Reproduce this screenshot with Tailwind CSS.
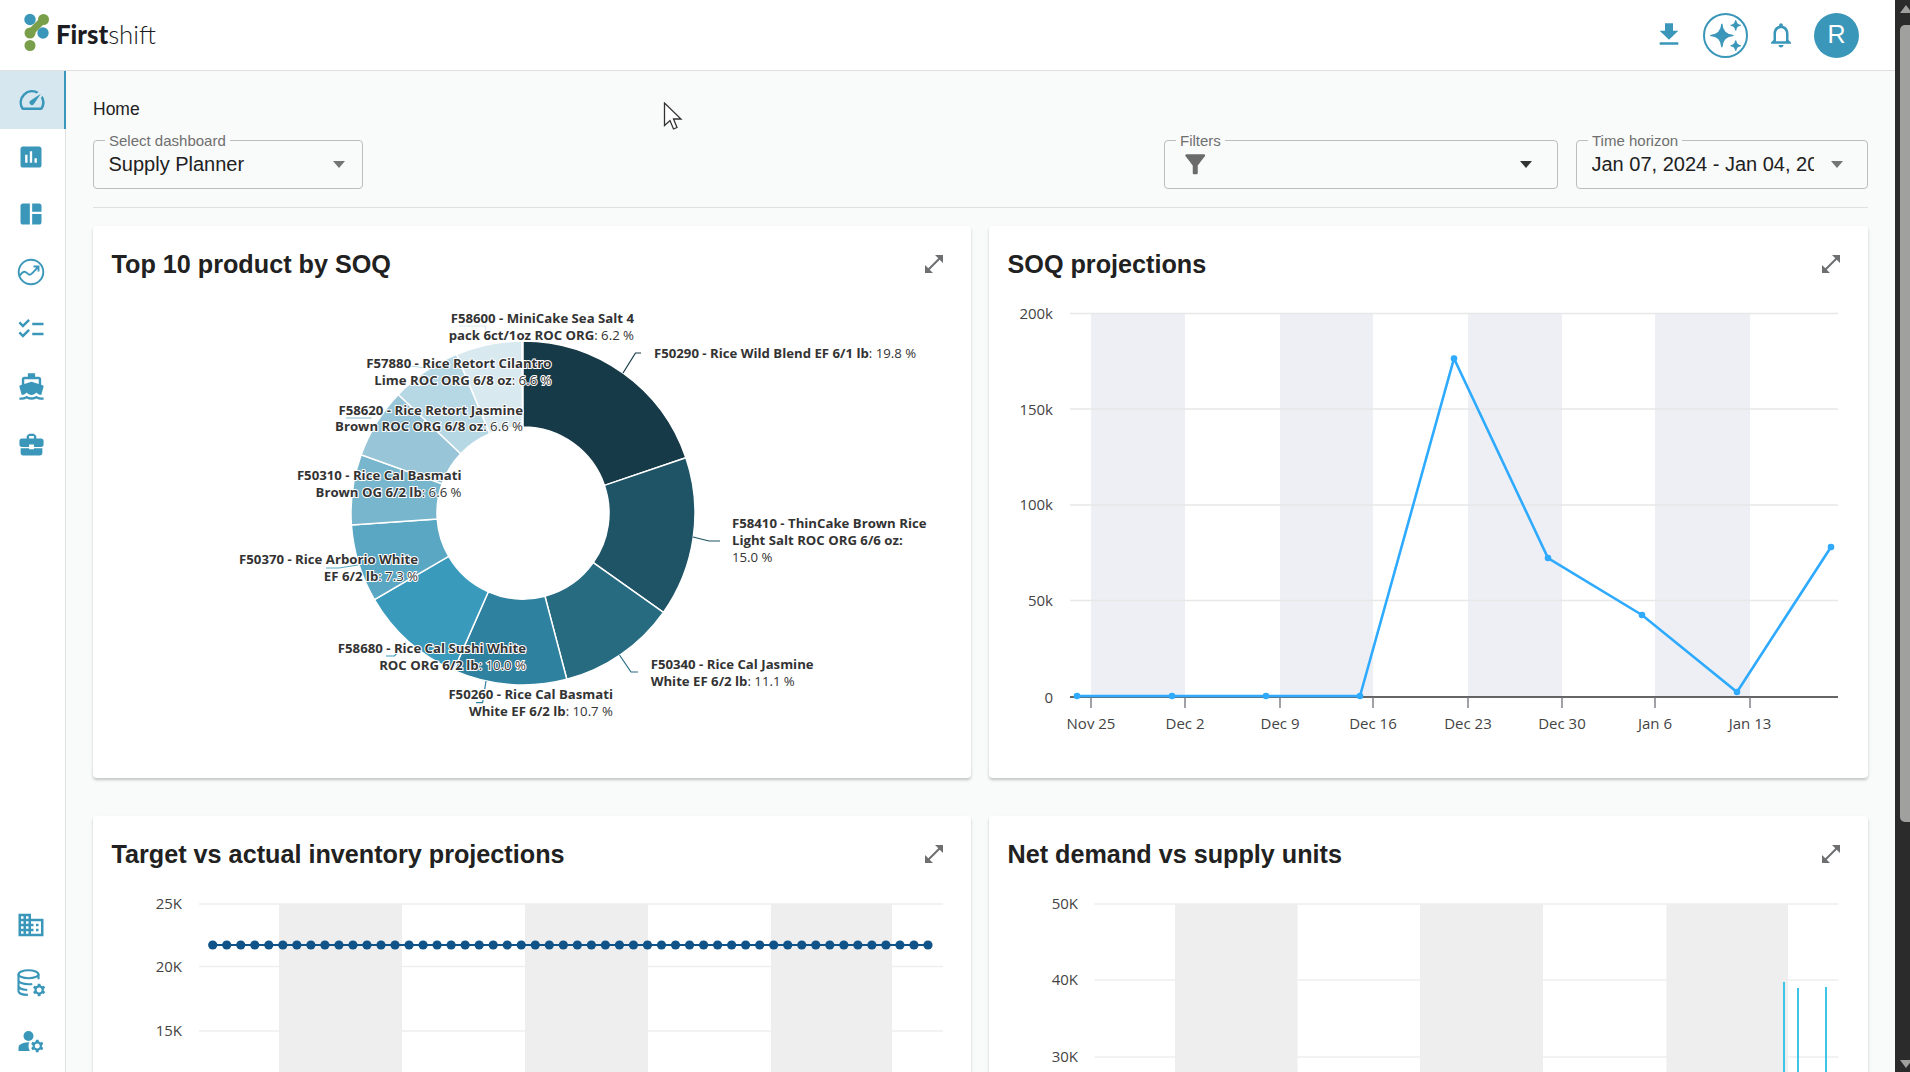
<!DOCTYPE html>
<html lang="en">
<head>
  <meta charset="UTF-8">
  <title>Firstshift - Home</title>
  <script src="https://cdn.jsdelivr.net/npm/@tailwindcss/browser@4"></script>
</head>
<body class="h-screen overflow-hidden bg-[#f9fafa] text-[#212121] font-['Liberation_Sans',Arial,sans-serif]">
<div class="flex h-screen">
  <div class="flex-1 flex flex-col min-w-0">

    <!-- Header -->
    <header class="h-[71px] shrink-0 bg-white border-b border-[#dfe1e1] flex items-center justify-between pl-[21px] pr-[36px]">
      <div class="flex items-center gap-[5px] -mt-[2px]">
        <svg class="w-[30px] h-[44px]" viewBox="21 13 30 44">
          <path d="M43.5 20.5 30 34" stroke="#7a9f4a" stroke-width="7"/>
          <circle cx="30" cy="20.5" r="5.7" fill="#3b97b9"/>
          <circle cx="43.5" cy="20.5" r="5.5" fill="#7a9f4a"/>
          <circle cx="30" cy="34" r="5.5" fill="#7a9f4a"/>
          <circle cx="43" cy="34" r="5.7" fill="#3b97b9"/>
          <circle cx="30" cy="46.5" r="5.5" fill="#7a9f4a"/>
        </svg>
        <div class="font-['Lato',sans-serif] text-[25.8px] leading-none text-[#1c1c22] mt-[2px]"><span class="font-black">First</span><span class="font-light">shift</span></div>
      </div>
      <div class="flex items-center">
        <svg class="w-[24px] h-[24px] -mt-[2px] fill-[#3b97b9] mr-[22px]" viewBox="3 2 18 19" preserveAspectRatio="none"><path d="M5 20h14v-2H5v2zM19 9h-4V3H9v6H5l7 7 7-7z"/></svg>
        <div class="w-[45px] h-[45px] rounded-full border-2 border-[#3b97b9] flex items-center justify-center mr-[18.5px]">
          <svg class="w-[35px] h-[35px] fill-[#3b97b9]" viewBox="0 0 24 24"><path d="M19 8.5Q19.3 5.3 22.5 5 19.3 4.7 19 1.5 18.7 4.7 15.5 5 18.7 5.3 19 8.5zM9.5 20Q9.9 12.4 17.5 12 9.9 11.6 9.5 4 9.1 11.6 1.5 12 9.1 12.4 9.5 20zM19 15.5Q18.7 18.7 15.5 19 18.7 19.3 19 22.5 19.3 19.3 22.5 19 19.3 18.7 19 15.5z" stroke="#3b97b9" stroke-width=".8"/></svg>
        </div>
        <svg class="w-[30px] h-[30px] fill-[#3b97b9] mr-[18px]" viewBox="0 0 24 24"><path d="M12 22c1.1 0 2-.9 2-2h-4c0 1.1.9 2 2 2zm6-6v-5c0-3.07-1.63-5.64-4.5-6.32V4c0-.83-.67-1.5-1.5-1.5s-1.5.67-1.5 1.5v.68C7.64 5.36 6 7.92 6 11v5l-2 2v1h16v-1l-2-2zm-2 1H8v-6c0-2.48 1.51-4.5 4-4.5s4 2.02 4 4.5v6z"/></svg>
        <div class="w-[45px] h-[45px] rounded-full bg-[#3b97b9] text-white text-[25px] flex items-center justify-center">R</div>
      </div>
    </header>

    <div class="flex-1 flex min-h-0">
      <!-- Sidebar -->
      <aside class="w-[66px] shrink-0 bg-white border-r border-[#dfe1e1] flex flex-col justify-between fill-[#3b97b9]">
        <div class="flex flex-col">
          <div class="h-[58px] flex items-center justify-center bg-[#d6e7ef] border-r-2 border-[#3b97b9] -mr-px pr-[1px]">
            <svg class="w-[30px] h-[30px]" viewBox="0 0 24 24"><path d="m20.38 8.57-1.23 1.85a8 8 0 0 1-.22 7.58H5.07A8 8 0 0 1 15.58 6.85l1.85-1.23A10 10 0 0 0 3.35 19a2 2 0 0 0 1.72 1h13.85a2 2 0 0 0 1.74-1 10 10 0 0 0-.27-10.44zm-9.79 6.84a2 2 0 0 0 2.83 0l5.66-8.49-8.49 5.66a2 2 0 0 0 0 2.83z"/></svg>
          </div>
          <div class="flex flex-col -mt-[1px] pr-[3px]">
            <div class="h-[57.5px] flex items-center justify-center"><svg class="w-[28px] h-[28px]" viewBox="0 0 24 24"><path d="M19 3H5c-1.1 0-2 .9-2 2v14c0 1.1.9 2 2 2h14c1.1 0 2-.9 2-2V5c0-1.1-.9-2-2-2zM9 17H7v-7h2v7zm4 0h-2V7h2v10zm4 0h-2v-4h2v4z"/></svg></div>
            <div class="h-[57.5px] flex items-center justify-center"><svg class="w-[28px] h-[28px]" viewBox="0 0 24 24"><path d="M11 21H5c-1.1 0-2-.9-2-2V5c0-1.1.9-2 2-2h6v18zm2 0h6c1.1 0 2-.9 2-2v-7h-8v9zm8-11V5c0-1.1-.9-2-2-2h-6v7h8z"/></svg></div>
            <div class="h-[57.5px] flex items-center justify-center"><svg class="w-[28px] h-[28px] fill-none stroke-[#3b97b9]" viewBox="0 0 28 28" stroke-width="1.9"><circle cx="14" cy="14" r="12.3"/><path d="M3 17.5c2-3 3.5-4.5 5.5-3.5s3 3.5 5 2.5 5-5 7.5-7.5M16.5 8.5h5v5"/></svg></div>
            <div class="h-[57.5px] flex items-center justify-center"><svg class="w-[30px] h-[30px]" viewBox="0 0 24 24"><path d="M22 7h-9v2h9V7zm0 8h-9v2h9v-2zM5.54 11 2 7.46l1.41-1.41 2.12 2.12 4.24-4.24 1.41 1.41L5.54 11zm0 8L2 15.46l1.41-1.41 2.12 2.12 4.24-4.24 1.41 1.41L5.54 19z"/></svg></div>
            <div class="h-[57.5px] flex items-center justify-center"><svg class="w-[29px] h-[29px]" viewBox="0 0 24 24"><path d="M20 21c-1.39 0-2.78-.47-4-1.32-2.44 1.71-5.56 1.71-8 0C6.78 20.53 5.39 21 4 21H2v2h2c1.38 0 2.74-.35 4-.99 2.52 1.29 5.48 1.29 8 0 1.26.65 2.62.99 4 .99h2v-2h-2zM3.95 19H4c1.6 0 3.02-.88 4-2 .98 1.12 2.4 2 4 2s3.02-.88 4-2c.98 1.12 2.4 2 4 2h.05l1.89-6.68c.08-.26.06-.54-.06-.78s-.34-.42-.6-.5L20 10.62V6c0-1.1-.9-2-2-2h-3V1H9v3H6c-1.1 0-2 .9-2 2v4.62l-1.29.42c-.26.08-.48.26-.6.5s-.15.52-.06.78L3.95 19zM6 6h12v3.97L12 8 6 9.97V6z"/></svg></div>
            <div class="h-[57.5px] flex items-center justify-center"><svg class="w-[29px] h-[29px]" viewBox="0 0 24 24"><path d="M10 16v-1H3.01L3 19c0 1.11.89 2 2 2h14c1.11 0 2-.89 2-2v-4h-7v1h-4zm10-9h-4.01V5l-2-2h-4l-2 2v2H4c-1.1 0-2 .9-2 2v3c0 1.11.89 2 2 2h6v-2h4v2h6c1.1 0 2-.9 2-2V9c0-1.1-.9-2-2-2zm-6 0h-4V5h4v2z"/></svg></div>
          </div>
        </div>
        <div class="flex flex-col pb-[2px] pr-[3px]">
          <div class="h-[58px] flex items-center justify-center"><svg class="w-[30px] h-[30px]" viewBox="0 0 24 24"><path d="M12 7V3H2v18h20V7H12zM6 19H4v-2h2v2zm0-4H4v-2h2v2zm0-4H4V9h2v2zm0-4H4V5h2v2zm4 12H8v-2h2v2zm0-4H8v-2h2v2zm0-4H8V9h2v2zm0-4H8V5h2v2zm10 12h-8v-2h2v-2h-2v-2h2v-2h-2V9h8v10zm-2-8h-2v2h2v-2zm0 4h-2v2h2v-2z"/></svg></div>
          <div class="h-[58px] flex items-center justify-center">
            <svg class="w-[30px] h-[30px]" viewBox="0 0 24 24">
              <g fill="none" stroke="#3b97b9" stroke-width="1.7"><ellipse cx="10" cy="5" rx="8" ry="3.2"/><path d="M2 5v13.5c0 1.6 3 2.9 7.5 3M2 9.8c0 1.7 3.5 3.2 8 3.2 1 0 2 0 3-.2M2 14.4c0 1.7 3.2 3 7 3.2M18 5v4"/></g>
              <path transform="translate(1.5 1.5)" d="M20.75 16c0-.22-.03-.42-.06-.63l1.14-1.01-1-1.73-1.45.49c-.32-.27-.68-.48-1.08-.63L18 11h-2l-.3 1.49c-.4.15-.76.36-1.08.63l-1.45-.49-1 1.73 1.14 1.01c-.03.21-.06.41-.06.63s.03.42.06.63l-1.14 1.01 1 1.73 1.45-.49c.32.27.68.48 1.08.63L16 21h2l.3-1.49c.4-.15.76-.36 1.08-.63l1.45.49 1-1.73-1.14-1.01c.03-.21.06-.41.06-.63zM17 18c-1.1 0-2-.9-2-2s.9-2 2-2 2 .9 2 2-.9 2-2 2z"/>
            </svg>
          </div>
          <div class="h-[58px] flex items-center justify-center"><svg class="w-[30px] h-[30px]" viewBox="0 0 24 24"><circle cx="10" cy="8" r="4"/><path d="M10.67 13.02c-.22-.01-.44-.02-.67-.02-2.42 0-4.68.67-6.61 1.82-.88.52-1.39 1.5-1.39 2.53V20h9.26c-.79-1.13-1.26-2.51-1.26-4 0-1.07.25-2.07.67-2.98z"/><path d="M20.75 16c0-.22-.03-.42-.06-.63l1.14-1.01-1-1.73-1.45.49c-.32-.27-.68-.48-1.08-.63L18 11h-2l-.3 1.49c-.4.15-.76.36-1.08.63l-1.45-.49-1 1.73 1.14 1.01c-.03.21-.06.41-.06.63s.03.42.06.63l-1.14 1.01 1 1.73 1.45-.49c.32.27.68.48 1.08.63L16 21h2l.3-1.49c.4-.15.76-.36 1.08-.63l1.45.49 1-1.73-1.14-1.01c.03-.21.06-.41.06-.63zM17 18c-1.1 0-2-.9-2-2s.9-2 2-2 2 .9 2 2-.9 2-2 2z"/></svg></div>
        </div>
      </aside>

      <!-- Main -->
      <main class="flex-1 min-w-0 overflow-hidden px-[27px]">
        <div class="pt-[28px] text-[17.5px] leading-[20px]">Home</div>
        <div class="mt-[21px] flex items-start justify-between pb-[18px] border-b border-[#dfe1e1]">
          <div class="relative w-[270px] h-[49px] border border-[#bdbdbd] rounded-[4px] flex items-center justify-between pl-[14.5px] pr-[17px]">
            <span class="absolute -top-[9px] left-[11px] px-[4px] bg-[#f9fafa] text-[15px] leading-[17px] text-[#6f6f6f]">Select dashboard</span>
            <span class="text-[20px] -mt-[2px]">Supply Planner</span>
            <span class="w-0 h-0 border-x-[6.5px] border-x-transparent border-t-[7px] border-t-[#757575]"></span>
          </div>
          <div class="flex gap-[18px]">
            <div class="relative w-[394px] h-[49px] border border-[#bdbdbd] rounded-[4px] flex items-center justify-between pl-[19px] pr-[25px]">
              <span class="absolute -top-[9px] left-[11px] px-[4px] bg-[#f9fafa] text-[15px] leading-[17px] text-[#6f6f6f]">Filters</span>
              <svg class="w-[22.5px] h-[22.5px] fill-[#6b6b6b]" viewBox="3 3 18 18"><path d="M4.25 5.61C6.27 8.2 10 13 10 13v6c0 .55.45 1 1 1h2c.55 0 1-.45 1-1v-6s3.72-4.8 5.74-7.39c.51-.66.04-1.61-.79-1.61H5.04c-.83 0-1.3.95-.79 1.61z"/></svg>
              <span class="w-0 h-0 border-x-[6.5px] border-x-transparent border-t-[7px] border-t-[#333]"></span>
            </div>
            <div class="relative w-[292px] h-[49px] border border-[#bdbdbd] rounded-[4px] flex items-center justify-between pl-[14.5px] pr-[24px]">
              <span class="absolute -top-[9px] left-[11px] px-[4px] bg-[#f9fafa] text-[15px] leading-[17px] text-[#6f6f6f]">Time horizon</span>
              <span class="text-[20px] w-[222px] -mt-[2px] overflow-hidden whitespace-nowrap">Jan 07, 2024 - Jan 04, 2025</span>
              <span class="w-0 h-0 border-x-[6.5px] border-x-transparent border-t-[7px] border-t-[#757575]"></span>
            </div>
          </div>
        </div>

        <div class="mt-[18px] grid grid-cols-[878px_879px] gap-x-[18px] gap-y-[38px] font-['Open_Sans',sans-serif]">

          <!-- Top 10 product by SOQ -->
          <section class="h-[552px] bg-white rounded-[4px] shadow-[0_2px_3px_rgba(0,0,0,0.22)]">
            <div class="h-[76px] flex items-center justify-between pl-[18.5px] pr-[25px]">
              <h2 class="mt-[2px] font-['Liberation_Sans',Arial,sans-serif] text-[25.2px] font-bold">Top 10 product by SOQ</h2>
              <svg class="w-[24px] h-[24px] fill-[#6d6f71]" viewBox="0 0 24 24"><path d="M21 11V3h-8l3.29 3.29-10 10L3 13v8h8l-3.29-3.29 10-10z"/></svg>
            </div>
            <svg class="block" width="878" height="476" viewBox="93 302 878 476">
              <g id="pie"></g>
              <g fill="none" stroke-width="1.2">
                <path d="M623 373 635.5 353H641" stroke="#163a47"/>
                <path d="M693 537 709 541H720" stroke="#1f5366"/>
                <path d="M619.5 655 631 672H638" stroke="#276b81"/>
                <path d="M486 681 482.6 702.7H476" stroke="#2f81a0"/>
                <path d="M406 642 394.5 656H386" stroke="#3a9abb"/>
                <path d="M358 565 339 568H326" stroke="#59a7c3"/>
                <path d="M371.5 418H346" stroke="#98c6d8"/>
                <path d="M426.6 368 410.5 366" stroke="#b6d8e4"/>
                <path d="M486 332 485 326H459" stroke="#d8e9f0"/>
              </g>
              <g class="text-[13.2px] fill-[#333] stroke-white stroke-[2px] [paint-order:stroke]" font-weight="700">
                <text x="634" y="322.5" text-anchor="end">F58600 - MiniCake Sea Salt 4</text>
                <text x="634" y="339.5" text-anchor="end">pack 6ct/1oz ROC ORG<tspan font-weight="400">: 6.2 %</tspan></text>
                <text x="654" y="357.5">F50290 - Rice Wild Blend EF 6/1 lb<tspan font-weight="400">: 19.8 %</tspan></text>
                <text x="551.5" y="367.5" text-anchor="end">F57880 - Rice Retort Cilantro</text>
                <text x="551.5" y="384.5" text-anchor="end">Lime ROC ORG 6/8 oz<tspan font-weight="400">: 6.6 %</tspan></text>
                <text x="523" y="414.5" text-anchor="end">F58620 - Rice Retort Jasmine</text>
                <text x="523" y="430.5" text-anchor="end">Brown ROC ORG 6/8 oz<tspan font-weight="400">: 6.6 %</tspan></text>
                <text x="461.5" y="479.5" text-anchor="end">F50310 - Rice Cal Basmati</text>
                <text x="461.5" y="496.5" text-anchor="end">Brown OG 6/2 lb<tspan font-weight="400">: 6.6 %</tspan></text>
                <text x="732" y="527.5">F58410 - ThinCake Brown Rice</text>
                <text x="732" y="544.5">Light Salt ROC ORG 6/6 oz:</text>
                <text x="732" y="561.5" font-weight="400">15.0 %</text>
                <text x="418" y="563.5" text-anchor="end">F50370 - Rice Arborio White</text>
                <text x="418" y="580.5" text-anchor="end">EF 6/2 lb<tspan font-weight="400">: 7.3 %</tspan></text>
                <text x="526" y="652.5" text-anchor="end">F58680 - Rice Cal Sushi White</text>
                <text x="526" y="669.5" text-anchor="end">ROC ORG 6/2 lb<tspan font-weight="400">: 10.0 %</tspan></text>
                <text x="650.7" y="668.5">F50340 - Rice Cal Jasmine</text>
                <text x="650.7" y="685.5">White EF 6/2 lb<tspan font-weight="400">: 11.1 %</tspan></text>
                <text x="613" y="698.5" text-anchor="end">F50260 - Rice Cal Basmati</text>
                <text x="613" y="715.5" text-anchor="end">White EF 6/2 lb<tspan font-weight="400">: 10.7 %</tspan></text>
              </g>
            </svg>
          </section>

          <!-- SOQ projections -->
          <section class="h-[552px] bg-white rounded-[4px] shadow-[0_2px_3px_rgba(0,0,0,0.22)]">
            <div class="h-[76px] flex items-center justify-between pl-[18.5px] pr-[25px]">
              <h2 class="mt-[2px] font-['Liberation_Sans',Arial,sans-serif] text-[25.2px] font-bold">SOQ projections</h2>
              <svg class="w-[24px] h-[24px] fill-[#6d6f71]" viewBox="0 0 24 24"><path d="M21 11V3h-8l3.29 3.29-10 10L3 13v8h8l-3.29-3.29 10-10z"/></svg>
            </div>
            <svg class="block" width="879" height="476" viewBox="989 302 879 476">
              <g fill="#eeeff4">
                <rect x="1091" y="313" width="94" height="384"/>
                <rect x="1280" y="313" width="93" height="384"/>
                <rect x="1468" y="313" width="94" height="384"/>
                <rect x="1655" y="313" width="95" height="384"/>
              </g>
              <g stroke="#e8e8e8" stroke-width="1.3">
                <path d="M1070 313.5H1838M1070 409H1838M1070 505H1838M1070 600.5H1838"/>
              </g>
              <path d="M1070 697H1838" stroke="#333" stroke-width="1.3"/>
              <path d="M1091 697v11M1185 697v11M1280 697v11M1373 697v11M1468 697v11M1562 697v11M1655 697v11M1750 697v11" stroke="#6e7079" stroke-width="1.3"/>
              <g class="text-[15px] fill-[#444]" text-anchor="end">
                <text x="1053" y="319">200k</text>
                <text x="1053" y="415">150k</text>
                <text x="1053" y="510">100k</text>
                <text x="1053" y="606">50k</text>
                <text x="1053" y="702.5">0</text>
              </g>
              <g class="text-[15px] fill-[#444]" text-anchor="middle">
                <text x="1091" y="729">Nov 25</text>
                <text x="1185" y="729">Dec 2</text>
                <text x="1280" y="729">Dec 9</text>
                <text x="1373" y="729">Dec 16</text>
                <text x="1468" y="729">Dec 23</text>
                <text x="1562" y="729">Dec 30</text>
                <text x="1655" y="729">Jan 6</text>
                <text x="1750" y="729">Jan 13</text>
              </g>
              <polyline points="1077,696 1172,696 1266,696 1360,696 1454,358.5 1548,558 1642,615 1737,692 1831,547" fill="none" stroke="#2eaaff" stroke-width="2.6"/>
              <g fill="#2eaaff">
                <circle cx="1077" cy="696" r="3.3"/><circle cx="1172" cy="696" r="3.3"/><circle cx="1266" cy="696" r="3.3"/><circle cx="1360" cy="696" r="3.3"/><circle cx="1454" cy="358.5" r="3.3"/><circle cx="1548" cy="558" r="3.3"/><circle cx="1642" cy="615" r="3.3"/><circle cx="1737" cy="692" r="3.3"/><circle cx="1831" cy="547" r="3.3"/>
              </g>
            </svg>
          </section>

          <!-- Target vs actual inventory projections -->
          <section class="h-[552px] bg-white rounded-[4px] shadow-[0_2px_3px_rgba(0,0,0,0.22)]">
            <div class="h-[76px] flex items-center justify-between pl-[18.5px] pr-[25px]">
              <h2 class="mt-[2px] font-['Liberation_Sans',Arial,sans-serif] text-[25.2px] font-bold">Target vs actual inventory projections</h2>
              <svg class="w-[24px] h-[24px] fill-[#6d6f71]" viewBox="0 0 24 24"><path d="M21 11V3h-8l3.29 3.29-10 10L3 13v8h8l-3.29-3.29 10-10z"/></svg>
            </div>
            <svg class="block" width="878" height="476" viewBox="93 892 878 476">
              <g fill="#eeeeee">
                <rect x="279" y="904" width="123" height="300"/>
                <rect x="525" y="904" width="123" height="300"/>
                <rect x="771" y="904" width="121" height="300"/>
              </g>
              <path d="M199 904H943M199 966.5H943M199 1031H943" stroke="#eeeeee" stroke-width="1.5"/>
              <g class="text-[15px] fill-[#444]" text-anchor="end">
                <text x="182" y="908.5">25K</text>
                <text x="182" y="972">20K</text>
                <text x="182" y="1035.5">15K</text>
              </g>
              <path d="M212.7 945H928" stroke="#0f5389" stroke-width="2"/>
              <g id="target-dots" fill="#0f5389"></g>
            </svg>
          </section>

          <!-- Net demand vs supply units -->
          <section class="h-[552px] bg-white rounded-[4px] shadow-[0_2px_3px_rgba(0,0,0,0.22)]">
            <div class="h-[76px] flex items-center justify-between pl-[18.5px] pr-[25px]">
              <h2 class="mt-[2px] font-['Liberation_Sans',Arial,sans-serif] text-[25.2px] font-bold">Net demand vs supply units</h2>
              <svg class="w-[24px] h-[24px] fill-[#6d6f71]" viewBox="0 0 24 24"><path d="M21 11V3h-8l3.29 3.29-10 10L3 13v8h8l-3.29-3.29 10-10z"/></svg>
            </div>
            <svg class="block" width="879" height="476" viewBox="989 892 879 476">
              <g fill="#eeeeee">
                <rect x="1175" y="904" width="122.5" height="300"/>
                <rect x="1420" y="904" width="123" height="300"/>
                <rect x="1666.5" y="904" width="121.5" height="300"/>
              </g>
              <path d="M1094.5 904H1838.5M1094.5 980H1838.5M1094.5 1057H1838.5" stroke="#eeeeee" stroke-width="1.5"/>
              <g class="text-[15px] fill-[#444]" text-anchor="end">
                <text x="1078" y="909">50K</text>
                <text x="1078" y="985">40K</text>
                <text x="1078" y="1062">30K</text>
              </g>
              <path d="M1784 982V1204M1798 988V1204M1826 987V1204" stroke="#3cc5e8" stroke-width="2"/>
            </svg>
          </section>
        </div>
      </main>
    </div>
  </div>

  <!-- Window scrollbar -->
  <div class="relative w-[15px] shrink-0 bg-[#2b2b2b]">
    <div class="absolute left-[5px] right-0 top-[25px] h-[797px] bg-[#a0a09e] rounded-l-[5px]"></div>
    <div class="absolute left-[5px] top-[5px] w-0 h-0 border-x-[6px] border-x-transparent border-b-[8px] border-b-[#a0a09e]"></div>
    <div class="absolute left-[5px] bottom-[4px] w-0 h-0 border-x-[6px] border-x-transparent border-t-[8px] border-t-[#a0a09e]"></div>
  </div>
</div>

<!-- Mouse pointer caught in the screenshot -->
<svg class="absolute left-[663px] top-[102px] w-[20px] h-[30px]" viewBox="0 0 20 30"><path d="M1.5 1v22.5l5.5-5 3.5 8.5 3.5-1.5-3.5-8.5h7.5z" fill="#fff" stroke="#333" stroke-width="1.3"/></svg>

<script>
  // donut slices, clockwise from 12 o'clock
  var slices = [
    [19.8, '#163a47'], [15.0, '#1f5366'], [11.1, '#276b81'], [10.7, '#2f81a0'], [10.0, '#3a9abb'],
    [7.3, '#59a7c3'], [6.6, '#78b6cd'], [6.6, '#98c6d8'], [6.6, '#b6d8e4'], [6.2, '#d8e9f0']
  ];
  var NS = 'http://www.w3.org/2000/svg';
  var cx = 523, cy = 513, R = 172, r = 86, start = 0;
  function pt(rad, pct) {
    var a = pct / 100 * 2 * Math.PI;
    return (cx + rad * Math.sin(a)).toFixed(2) + ' ' + (cy - rad * Math.cos(a)).toFixed(2);
  }
  slices.forEach(function (s) {
    var end = start + s[0], big = s[0] > 50 ? 1 : 0;
    var p = document.createElementNS(NS, 'path');
    p.setAttribute('d', 'M' + pt(R, start) + 'A' + R + ' ' + R + ' 0 ' + big + ' 1 ' + pt(R, end) +
      'L' + pt(r, end) + 'A' + r + ' ' + r + ' 0 ' + big + ' 0 ' + pt(r, start) + 'Z');
    p.setAttribute('fill', s[1]);
    p.setAttribute('stroke', '#fff');
    p.setAttribute('stroke-width', '1.5');
    document.getElementById('pie').appendChild(p);
    start = end;
  });

  // target inventory markers
  var dots = document.getElementById('target-dots');
  for (var i = 0; i < 52; i++) {
    var c = document.createElementNS(NS, 'circle');
    c.setAttribute('cx', 212.7 + i * 14.025);
    c.setAttribute('cy', 945);
    c.setAttribute('r', 4.6);
    dots.appendChild(c);
  }
</script>
</body>
</html>
